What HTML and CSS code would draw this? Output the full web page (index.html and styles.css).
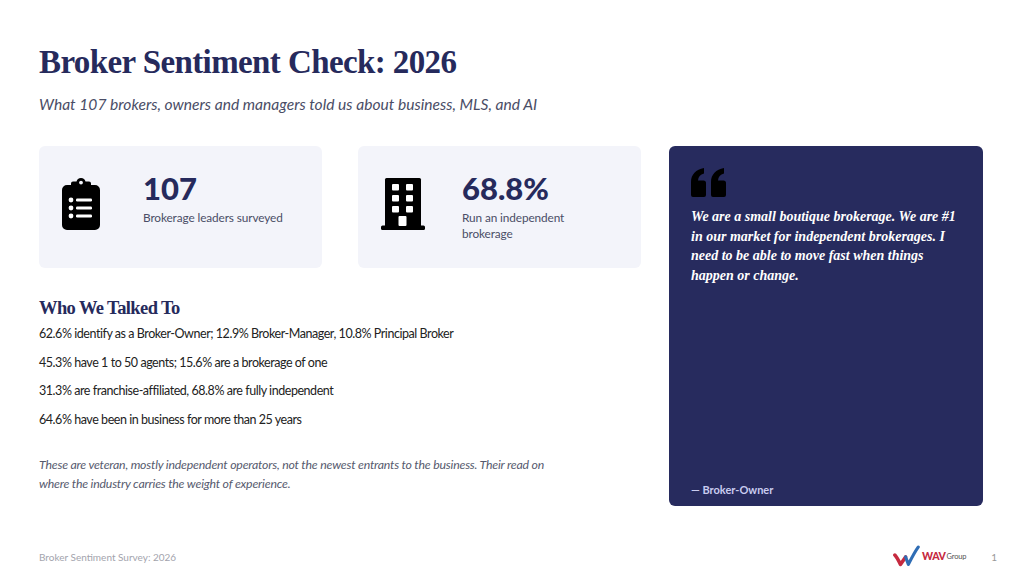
FILE: index.html
```html
<!DOCTYPE html>
<html lang="en">
<head>
<meta charset="utf-8">
<title>Broker Sentiment Check: 2026</title>
<link rel="stylesheet" href="styles.css">
</head>
<body>
<div class="slide">
  <header class="header">
    <h1 class="title">Broker Sentiment Check: 2026</h1>
    <p class="subtitle">What 107 brokers, owners and managers told us about business, MLS, and AI</p>
  </header>
  <main class="content">
    <section class="left">
      <div class="stats">
        <div class="card">
          <div class="card-icon">
            <svg class="ico-clip" viewBox="0 0 38 52" width="38" height="52">
              <path fill="#000" d="M19 0a4.6 4.6 0 0 1 4.5 3.6H27a2 2 0 0 1 2 2V7h4a5 5 0 0 1 5 5v35a5 5 0 0 1-5 5H5a5 5 0 0 1-5-5V12a5 5 0 0 1 5-5h4V5.6a2 2 0 0 1 2-2h3.5A4.6 4.6 0 0 1 19 0z"/>
              <circle cx="19" cy="4.6" r="1.9" fill="#f3f4fa"/>
              <circle cx="9" cy="22" r="2.4" fill="#fff"/>
              <circle cx="9" cy="30" r="2.4" fill="#fff"/>
              <circle cx="9" cy="38" r="2.4" fill="#fff"/>
              <rect x="14" y="20.5" width="16" height="3" rx="1.2" fill="#fff"/>
              <rect x="14" y="28.5" width="16" height="3" rx="1.2" fill="#fff"/>
              <rect x="14" y="36.5" width="16" height="3" rx="1.2" fill="#fff"/>
            </svg>
          </div>
          <div class="card-text">
            <div class="num">107</div>
            <div class="label">Brokerage leaders surveyed</div>
          </div>
        </div>
        <div class="card">
          <div class="card-icon">
            <svg class="ico-bld" viewBox="0 0 44 52" width="44" height="52">
              <rect x="4" y="0" width="36" height="49" rx="1.5" fill="#000"/>
              <rect x="0" y="47.5" width="44" height="4.5" rx="1.5" fill="#000"/>
              <rect x="11" y="6" width="7" height="6.5" rx="1" fill="#fff"/>
              <rect x="25" y="6" width="7" height="6.5" rx="1" fill="#fff"/>
              <rect x="11" y="17" width="7" height="6.5" rx="1" fill="#fff"/>
              <rect x="25" y="17" width="7" height="6.5" rx="1" fill="#fff"/>
              <rect x="11" y="28" width="7" height="6.5" rx="1" fill="#fff"/>
              <rect x="25" y="28" width="7" height="6.5" rx="1" fill="#fff"/>
              <rect x="17.5" y="38" width="8" height="10" rx="1" fill="#fff"/>
            </svg>
          </div>
          <div class="card-text">
            <div class="num">68.8%</div>
            <div class="label">Run an independent<br>brokerage</div>
          </div>
        </div>
      </div>
      <h2 class="section-title">Who We Talked To</h2>
      <ul class="facts">
        <li>62.6% identify as a Broker-Owner; 12.9% Broker-Manager, 10.8% Principal Broker</li>
        <li>45.3% have 1 to 50 agents; 15.6% are a brokerage of one</li>
        <li>31.3% are franchise-affiliated, 68.8% are fully independent</li>
        <li>64.6% have been in business for more than 25 years</li>
      </ul>
      <p class="note">These are veteran, mostly independent operators, not the newest entrants to the business. Their read on where the industry carries the weight of experience.</p>
    </section>
    <aside class="quote-card">
      <svg class="ico-quote" viewBox="0 0 35 29" width="35" height="29">
        <path fill="#000" d="M0 27V14C0 6.5 5 1.5 13 0v5.5C9.3 6.6 7.2 9 7 12.5h5.5A2.5 2.5 0 0 1 15 15v12a2 2 0 0 1-2 2H2a2 2 0 0 1-2-2z"/>
        <path fill="#000" d="M20 27V14C20 6.5 25 1.5 33 0v5.5C29.3 6.6 27.2 9 27 12.5h5.5A2.5 2.5 0 0 1 35 15v12a2 2 0 0 1-2 2H22a2 2 0 0 1-2-2z"/>
      </svg>
      <p class="quote-text">We are a small boutique brokerage. We are #1 in our market for independent brokerages. I need to be able to move fast when things happen or change.</p>
      <p class="quote-by">— Broker-Owner</p>
    </aside>
  </main>
  <footer class="footer">
    <span class="foot-left">Broker Sentiment Survey: 2026</span>
    <div class="foot-right">
      <div class="logo">
        <svg viewBox="0 0 30 22" width="28" height="22">
          <path d="M2 10 C4 12 6 16 8 20 L13.5 12" fill="none" stroke="#c62a3f" stroke-width="3.8" stroke-linecap="round" stroke-linejoin="round"/>
          <path d="M13.5 12 L16.5 20 C20 13 23 7 27 1.5" fill="none" stroke="#2f6db5" stroke-width="3.4" stroke-linecap="round" stroke-linejoin="round"/>
        </svg>
        <span class="logo-wav">WAV</span><span class="logo-group">Group</span>
      </div>
      <span class="page-num">1</span>
    </div>
  </footer>
</div>
</body>
</html>
```
FILE: styles.css
```css
* { box-sizing: border-box; }
html, body { margin: 0; padding: 0; background: #fff; }
body { width: 1024px; height: 576px; overflow: hidden; font-family: Lato, "Liberation Sans", sans-serif; }
.slide { width: 1024px; height: 576px; padding: 0 41px 0 39px; display: flex; flex-direction: column; }
.header { padding-top: 40px; }
.title { margin: 0; font-family: "Liberation Serif", serif; font-weight: 700; font-size: 33px; line-height: 44px; color: #262a5c; letter-spacing: -0.6px; }
.subtitle { margin: 10px 0 0; font-style: italic; font-size: 15.6px; line-height: 20px; color: #4a4d66; }
.content { display: flex; gap: 28px; margin-top: 32px; }
.left { width: 602px; }
.stats { display: flex; gap: 36px; }
.card { width: 283px; height: 122px; background: #f3f4fa; border-radius: 6px; display: flex; align-items: flex-start; padding: 24px 16px 0 23px; }
.card-icon { width: 58px; margin-right: 23px; padding-top: 8px; flex: none; }
.card-icon svg { display: block; }
.num { font-weight: 900; font-size: 31px; line-height: 36px; color: #262a5c; }
.label { font-size: 11.8px; line-height: 16px; color: #4a4d66; margin-top: 4px; letter-spacing: -0.1px; }
.section-title { margin: 28px 0 0; font-family: "Liberation Serif", serif; font-weight: 700; font-size: 18.5px; line-height: 24px; color: #262a5c; letter-spacing: -0.6px; }
.facts { list-style: none; margin: 0; padding: 0; }
.facts li { font-size: 12.5px; line-height: 28.6px; color: #222; letter-spacing: -0.45px; }
.note { margin: 21px 0 0; max-width: 528px; font-style: italic; font-size: 12.3px; line-height: 19px; color: #565a6e; letter-spacing: -0.2px; }
.quote-card { width: 314px; height: 360px; background: #272b5e; border-radius: 6px; padding: 22px 22px 0 22px; display: flex; flex-direction: column; }
.ico-quote { display: block; }
.quote-text { margin: 10px 0 0; font-family: "Liberation Serif", serif; font-style: italic; font-weight: 700; font-size: 14px; line-height: 19.5px; color: #fff; }
.quote-by { margin: auto 0 9px; font-weight: 700; font-size: 11px; line-height: 14px; color: #c9ccef; }
.footer { margin-top: auto; height: 44px; display: flex; justify-content: space-between; align-items: flex-start; padding-top: 18px; }
.foot-left { font-size: 10px; line-height: 14px; color: #a3a4ad; }
.foot-right { display: flex; align-items: flex-start; margin-right: -14px; }
.logo { display: flex; align-items: center; height: 22px; margin-top: -5px; }
.logo svg { display: block; margin-right: 1px; }
.logo-wav { font-weight: 900; font-size: 10.5px; color: #c62a3f; letter-spacing: -0.4px; }
.logo-group { font-size: 7.5px; color: #555; margin-left: 1px; letter-spacing: -0.2px; }
.page-num { font-size: 10px; line-height: 14px; color: #999; margin-left: 25px; }
```
